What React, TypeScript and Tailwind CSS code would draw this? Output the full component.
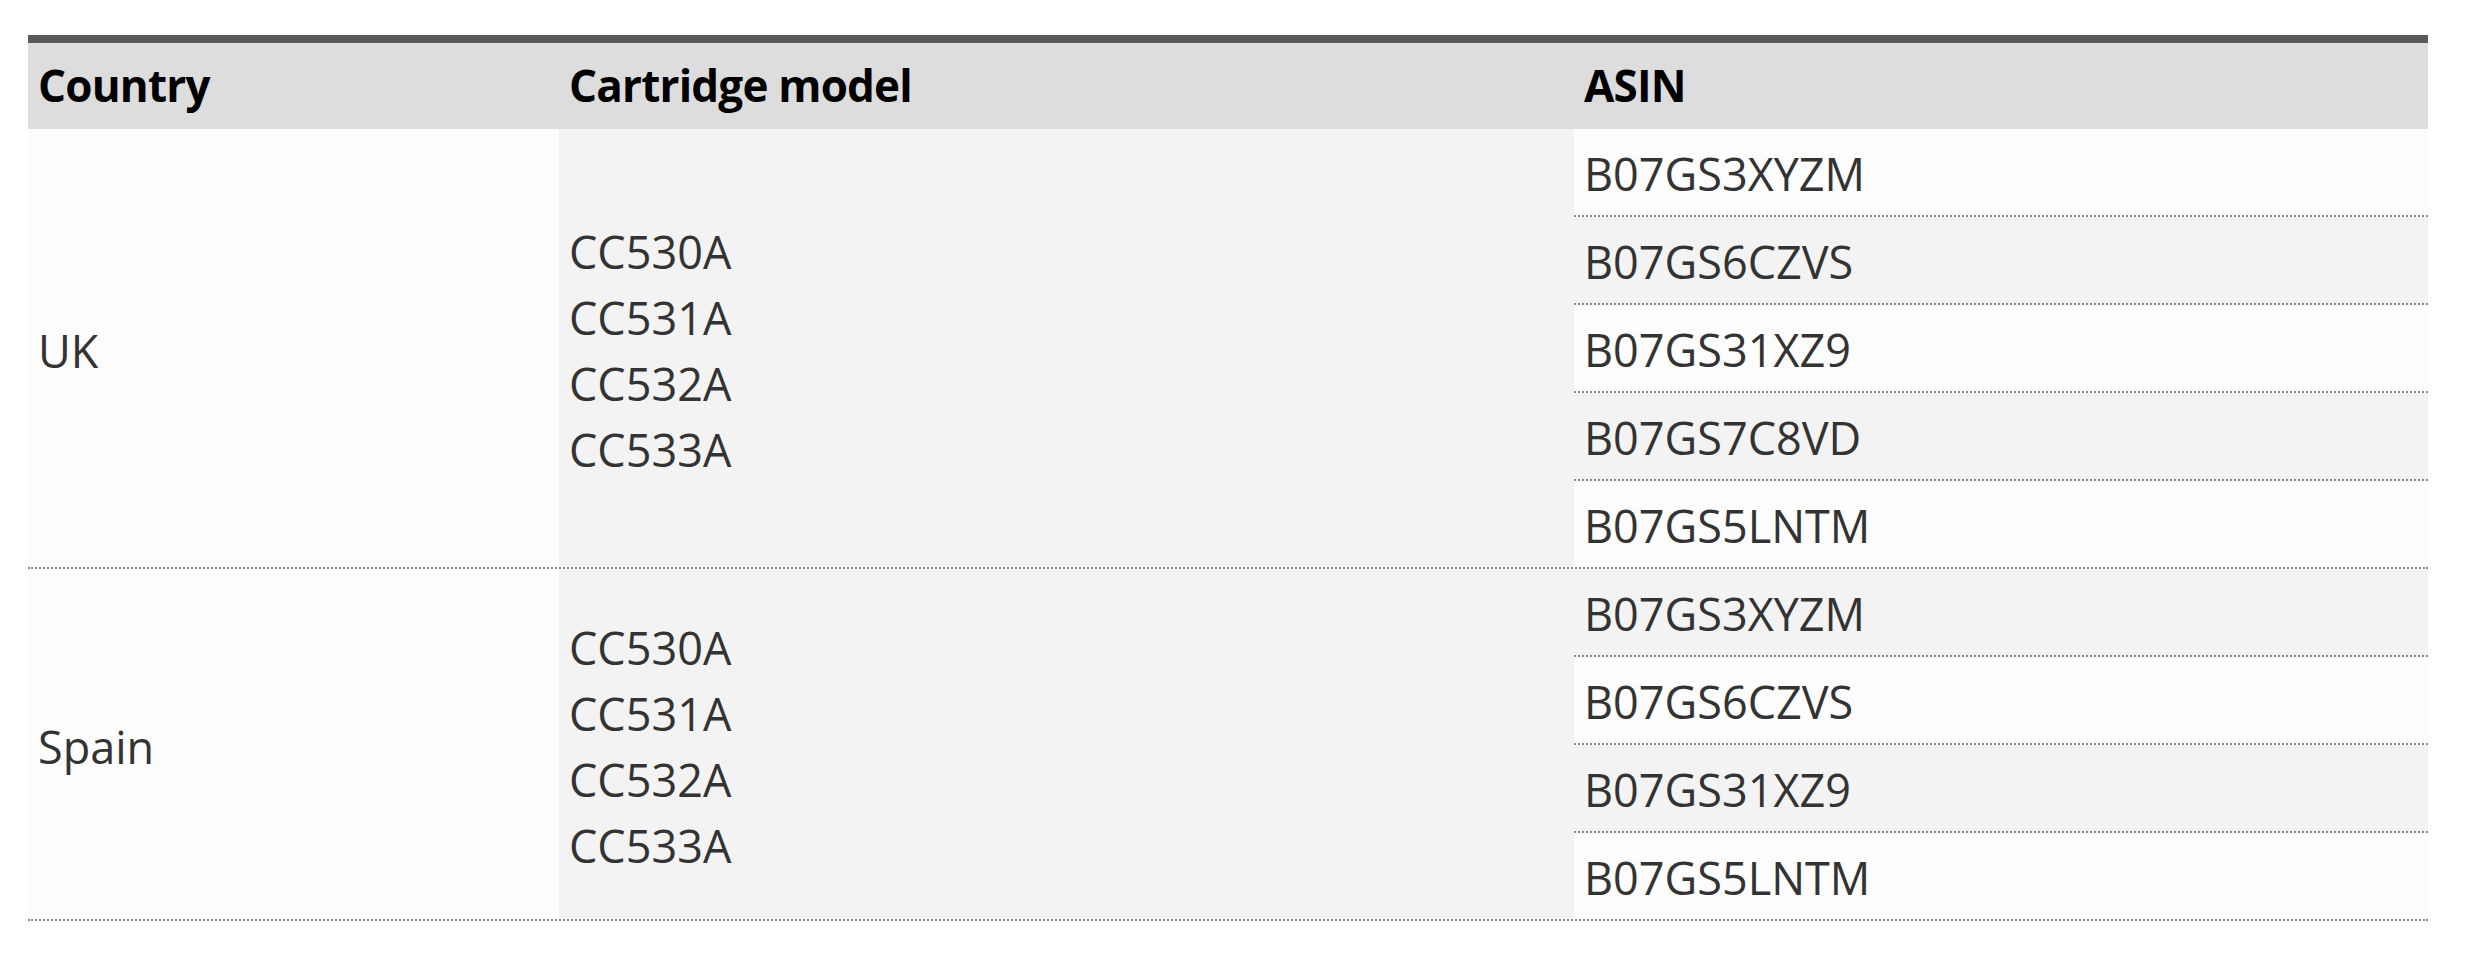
const groups = [
  {
    country: "UK",
    models: ["CC530A", "CC531A", "CC532A", "CC533A"],
    asins: ["B07GS3XYZM", "B07GS6CZVS", "B07GS31XZ9", "B07GS7C8VD", "B07GS5LNTM"],
    startGray: false,
  },
  {
    country: "Spain",
    models: ["CC530A", "CC531A", "CC532A", "CC533A"],
    asins: ["B07GS3XYZM", "B07GS6CZVS", "B07GS31XZ9", "B07GS5LNTM"],
    startGray: true,
  },
];

export default function App() {
  return (
    <div className="min-h-screen bg-white pt-[35px] pl-[28px] font-['Open_Sans',sans-serif] text-[45px] leading-[66px]">
      <div className="w-[2400px]">
        {/* header */}
        <div className="flex border-t-[8px] border-[#595959] bg-[#dddddd] font-bold text-black text-[44px] tracking-[-0.8px]">
          <div className="w-[531px] px-[10px] pt-[9px] pb-[11px]">Country</div>
          <div className="w-[1015px] px-[10px] pt-[9px] pb-[11px]">Cartridge model</div>
          <div className="flex-1 px-[10px] pt-[9px] pb-[11px]">ASIN</div>
        </div>

        {groups.map((g) => (
          <div key={g.country} className="flex border-b-2 border-dotted border-[#888888] text-[#333333]">
            <div className="w-[531px] flex items-center px-[10px] pt-[5px] bg-[#fdfdfd]">{g.country}</div>
            <div className="w-[1015px] flex flex-col justify-center px-[10px] pt-[5px] bg-[#f3f3f3]">
              {g.models.map((m) => (
                <div key={m}>{m}</div>
              ))}
            </div>
            <div className="flex-1 flex flex-col">
              {g.asins.map((a, i) => {
                const gray = g.startGray ? i % 2 === 0 : i % 2 === 1;
                const last = i === g.asins.length - 1;
                return (
                  <div
                    key={a + i}
                    className={
                      (gray ? "bg-[#f3f3f3] " : "bg-[#fdfdfd] ") +
                      (last ? "" : "border-b-2 border-dotted border-[#888888] ") +
                      "px-[10px] pt-[12px] pb-[8px]"
                    }
                  >
                    {a}
                  </div>
                );
              })}
            </div>
          </div>
        ))}
      </div>
    </div>
  );
}
